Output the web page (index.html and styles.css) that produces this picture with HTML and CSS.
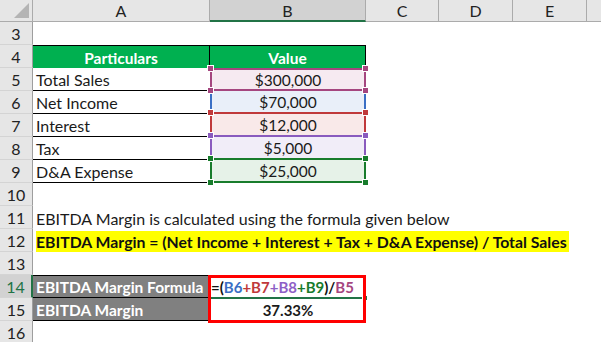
FILE: index.html
```html
<!DOCTYPE html>
<html>
<head>
<meta charset="utf-8">
<link rel="stylesheet" href="styles.css">
</head>
<body>
<div class="sheet">
  <div class="row hdr">
    <div class="corner"><span class="tri"></span></div>
    <div class="ch">A</div>
    <div class="ch sel">B</div>
    <div class="ch">C</div>
    <div class="ch">D</div>
    <div class="ch">E</div>
    <div class="ch last"></div>
  </div>

  <div class="row"><div class="rh">3</div><div class="c"></div><div class="c"></div><div class="c"></div><div class="c"></div><div class="c"></div><div class="c"></div></div>

  <div class="row">
    <div class="rh">4</div>
    <div class="c th a4">Particulars</div>
    <div class="c th b4">Value</div>
    <div class="c"></div><div class="c"></div><div class="c"></div><div class="c"></div>
  </div>

  <div class="row">
    <div class="rh">5</div>
    <div class="c la">Total Sales</div>
    <div class="c val b5">$300,000<i class="h tl m"></i><i class="h tr m"></i><i class="h bl m"></i><i class="h br m"></i></div>
    <div class="c"></div><div class="c"></div><div class="c"></div><div class="c"></div>
  </div>

  <div class="row">
    <div class="rh">6</div>
    <div class="c la">Net Income</div>
    <div class="c val b6">$70,000</div>
    <div class="c"></div><div class="c"></div><div class="c"></div><div class="c"></div>
  </div>

  <div class="row">
    <div class="rh">7</div>
    <div class="c la">Interest</div>
    <div class="c val b7">$12,000<i class="h tl r"></i><i class="h tr r"></i></div>
    <div class="c"></div><div class="c"></div><div class="c"></div><div class="c"></div>
  </div>

  <div class="row">
    <div class="rh">8</div>
    <div class="c la">Tax</div>
    <div class="c val b8">$5,000<i class="h tl p"></i><i class="h tr p"></i></div>
    <div class="c"></div><div class="c"></div><div class="c"></div><div class="c"></div>
  </div>

  <div class="row">
    <div class="rh">9</div>
    <div class="c la">D&amp;A Expense</div>
    <div class="c val b9">$25,000<i class="h tl g"></i><i class="h tr g"></i><i class="h bl g"></i><i class="h br g"></i></div>
    <div class="c"></div><div class="c"></div><div class="c"></div><div class="c"></div>
  </div>

  <div class="row"><div class="rh">10</div><div class="c"></div><div class="c"></div><div class="c"></div><div class="c"></div><div class="c"></div><div class="c"></div></div>

  <div class="row">
    <div class="rh">11</div>
    <div class="c span">EBITDA Margin is calculated using the formula given below</div>
  </div>

  <div class="row">
    <div class="rh">12</div>
    <div class="c span"><span class="hl">EBITDA Margin = (Net Income + Interest + Tax + D&amp;A Expense) / Total Sales</span></div>
  </div>

  <div class="row"><div class="rh">13</div><div class="c"></div><div class="c"></div><div class="c"></div><div class="c"></div><div class="c"></div><div class="c"></div></div>

  <div class="row">
    <div class="rh selrow">14</div>
    <div class="c gray g14">EBITDA Margin Formula</div>
    <div class="c formula"><span class="k">=(</span><span class="cb">B6</span><span class="cr">+B7</span><span class="cp">+B8</span><span class="cg">+B9</span><span class="k">)/</span><span class="cm">B5</span><i class="selline"></i><i class="fill"></i><i class="redbox"></i></div>
    <div class="c"></div><div class="c"></div><div class="c"></div><div class="c"></div>
  </div>

  <div class="row">
    <div class="rh">15</div>
    <div class="c gray g15">EBITDA Margin</div>
    <div class="c result">37.33%</div>
    <div class="c"></div><div class="c"></div><div class="c"></div><div class="c"></div>
  </div>

  <div class="row"><div class="rh">16</div><div class="c"></div><div class="c"></div><div class="c"></div><div class="c"></div><div class="c"></div><div class="c"></div></div>
</div>
</body>
</html>
```

FILE: styles.css
```css
html, body {
  margin: 0;
  padding: 0;
  background: #ffffff;
  overflow: hidden;
}

.sheet {
  width: 601px;
  height: 342px;
  overflow: hidden;
  font-family: "Lato", "Liberation Sans", sans-serif;
  font-size: 16px;
  color: #1a1a1a;
}

.row {
  display: grid;
  grid-template-columns: 33px 177px 156px 73px 74px 74px 14px;
  height: 23px;
}

.row.hdr {
  height: 22px;
}

.corner {
  background: #e6e6e6;
  border-right: 1px solid #ababab;
  border-bottom: 1px solid #ababab;
  box-sizing: border-box;
  position: relative;
}

.tri {
  position: absolute;
  right: 3px;
  bottom: 3px;
  width: 15px;
  height: 15px;
  background: #b4b4b4;
  clip-path: polygon(100% 0, 100% 100%, 0 100%);
}

.ch {
  background: #e6e6e6;
  border-right: 1px solid #ababab;
  border-bottom: 1px solid #ababab;
  box-sizing: border-box;
  display: flex;
  align-items: center;
  justify-content: center;
  font-size: 16px;
  color: #222;
}

.ch.sel {
  background: #d2d2d2;
  border-bottom: 2px solid #217346;
}

.ch.last {
  border-right: none;
}

.rh {
  background: #e6e6e6;
  border-right: 1px solid #9e9e9e;
  border-bottom: 1px solid #d4d4d4;
  box-sizing: border-box;
  display: flex;
  align-items: center;
  justify-content: center;
  font-size: 16px;
  color: #222;
  padding-top: 1px;
}

.rh.selrow {
  background: #d2d2d2;
  color: #217346;
  border-right: 2px solid #217346;
}

.c {
  box-sizing: border-box;
  display: flex;
  align-items: center;
  white-space: nowrap;
  padding-top: 1px;
  position: relative;
}

.span {
  grid-column: 2 / -1;
  padding-left: 3px;
}

.la {
  padding-left: 3px;
  border-bottom: 1px solid #000;
}

.th {
  background: #00b050;
  color: #ffffff;
  font-weight: 700;
  font-size: 15.5px;
  justify-content: center;
  border-top: 1px solid #000;
}

.a4 {
  border-right: 1px solid #000;
}

.b4 {
  border-right: 1px solid #000;
}

.val {
  justify-content: center;
  font-size: 15.5px;
  border-left: 2px solid;
  border-right: 2px solid;
}

.b5 {
  background: #f6eaf1;
  border: 2px solid #a5467f;
}

.b6 {
  background: #e9eff9;
  border-color: #3b6fc5;
  border-bottom: 2px solid #c0393b;
}

.b7 {
  background: #f9e9e9;
  border-color: #c0393b;
  border-bottom: 2px solid #8a5bbe;
}

.b8 {
  background: #f1edf8;
  border-color: #8a5bbe;
  border-bottom: 2px solid #187c2c;
}

.b9 {
  background: #e6f2e8;
  border-color: #187c2c;
  border-bottom: 2px solid #187c2c;
}

.h {
  position: absolute;
  width: 5px;
  height: 5px;
  border: 1px solid #ffffff;
  z-index: 2;
}

.h.tl { left: -5px; top: -5px; }
.h.tr { right: -5px; top: -5px; }
.h.bl { left: -5px; bottom: -5px; }
.h.br { right: -5px; bottom: -5px; }

.h.m { background: #a5467f; }
.h.r { background: #c0393b; }
.h.p { background: #8a5bbe; }
.h.g { background: #187c2c; }

.hl {
  background: #ffff00;
  font-weight: 700;
  font-size: 15.8px;
  line-height: 21px;
  display: inline-block;
  padding-right: 2px;
  color: #111;
}

.gray {
  background: #808080;
  color: #ffffff;
  font-weight: 700;
  font-size: 15.5px;
  padding-left: 3px;
  border-bottom: 1px solid #000;
}

.g14 {
  border-top: 1px solid #000;
}

.formula {
  font-weight: 700;
  font-size: 15px;
  padding-left: 1px;
}

.k { color: #111; }
.cb { color: #3b6fc5; }
.cr { color: #c0393b; }
.cp { color: #8e5fc6; }
.cg { color: #187c2c; }
.cm { color: #a5467f; }

.result {
  justify-content: center;
  font-weight: 700;
  font-size: 15px;
}

.selline {
  position: absolute;
  left: 1px;
  right: 3px;
  bottom: -1px;
  height: 2px;
  background: #217346;
}

.fill {
  position: absolute;
  right: -2px;
  bottom: -3px;
  width: 4px;
  height: 4px;
  background: #217346;
  border: 1px solid #fff;
}

.redbox {
  position: absolute;
  left: -2px;
  top: 0;
  width: 158px;
  height: 48px;
  box-sizing: border-box;
  border: 3px solid #ff0000;
  z-index: 3;
}
```
